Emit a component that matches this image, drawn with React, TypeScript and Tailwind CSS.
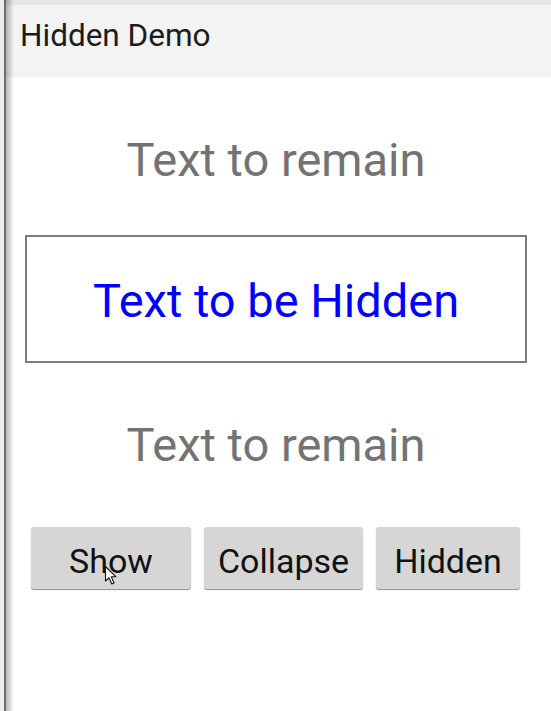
import React from "react";

function Cursor() {
  return (
    <svg
      className="absolute left-[104px] top-[565px] pointer-events-none"
      width="16"
      height="22"
      viewBox="0 0 16 22"
    >
      <path
        d="M1.5 1.5 L1.5 16 L5 12.8 L7.8 19 L10 18 L7.3 11.8 L12 11.8 Z"
        fill="#fff"
        stroke="#111"
        strokeWidth="1.1"
        strokeLinejoin="round"
      />
    </svg>
  );
}

const buttons = [
  { label: "Show", width: "w-[160px]" },
  { label: "Collapse", width: "w-[159px]" },
  { label: "Hidden", width: "w-[144px]" },
];

export default function App() {
  return (
    <div className="relative w-[551px] h-[711px] flex bg-white overflow-hidden font-['Roboto',sans-serif]">
      {/* window frame on the left */}
      <div className="w-[4px] bg-[#ececec]" />
      <div className="w-[2px] bg-[#6e6e6e]" />

      <div className="relative flex-1 flex flex-col">
        <div className="h-[5px] bg-[#e6e6e6]" />
        <div className="h-[72px] bg-[#f3f3f3] flex items-center pl-[14px] pb-[10px]">
          <span className="text-[31.5px] leading-none text-[#1c1c1c]">Hidden Demo</span>
        </div>

        <div className="flex flex-col items-center pr-[5px]">
          <div className="mt-[55px] h-[56px] leading-[56px] text-[47px] text-[#737373]">
            Text to remain
          </div>

          <div className="mt-[47px] ml-[19px] mr-[19px] self-stretch h-[128px] border-2 border-[#7c7c7c] flex items-center justify-center">
            <span className="text-[47px] leading-none text-[#0000ff] pt-[3px]">Text to be Hidden</span>
          </div>

          <div className="mt-[54px] h-[56px] leading-[56px] text-[47px] text-[#737373]">
            Text to remain
          </div>

          <div className="mt-[54px] self-start ml-[25px] flex gap-[13px]">
            {buttons.map((b) => (
              <button
                key={b.label}
                className={`${b.width} h-[62px] rounded-[3px] bg-[#d6d6d6] shadow-[0_1px_1px_rgba(0,0,0,0.45)] text-[34px] leading-none text-[#111] pt-[5px]`}
              >
                {b.label}
              </button>
            ))}
          </div>
        </div>

        {/* shadow cast by the frame */}
        <div className="absolute left-0 top-0 bottom-0 w-[8px] pointer-events-none bg-gradient-to-r from-[rgba(0,0,0,0.28)] to-transparent" />
      </div>

      <Cursor />
    </div>
  );
}
